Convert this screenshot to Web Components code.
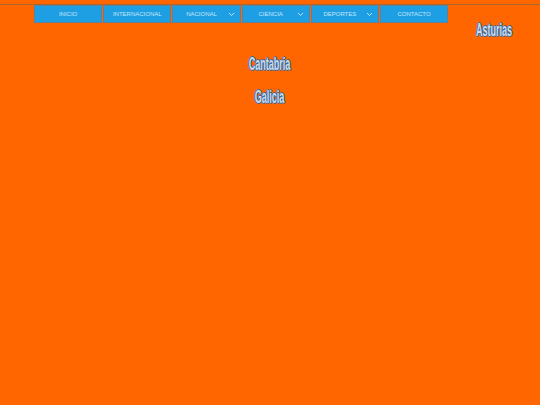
<!DOCTYPE html>
<html><head><meta charset="utf-8"><title>Menu</title>
<style>html,body{margin:0;padding:0;background:#ff6600;height:100%;font-family:"Liberation Sans",sans-serif}</style>
</head><body>
<site-page>
<site-nav slot="nav">
<nav-item>INICIO</nav-item><nav-item>INTERNACIONAL</nav-item><nav-item caret>NACIONAL</nav-item><nav-item caret>CIENCIA</nav-item><nav-item caret>DEPORTES</nav-item><nav-item>CONTACTO</nav-item>
</site-nav>
<region-title slot="side">Asturias</region-title>
<region-title>Cantabria</region-title>
<region-title>Galicia</region-title>
</site-page>
<script>
customElements.define('site-page',class extends HTMLElement{constructor(){super();this.attachShadow({mode:'open'}).innerHTML=`<style>
:host{display:block;width:540px;height:405px;background:#ff6600;box-sizing:border-box;overflow:hidden}
.rule{height:1px;margin-top:4px;background:#a8682f}
.nav{display:block;padding-left:34px}
.side{display:flex;justify-content:flex-end;padding-right:10px;margin-top:-3px;height:34px}
.main{display:flex;flex-direction:column;align-items:center;gap:13px;margin-top:0}
</style><div class="rule"></div><div class="nav"><slot name="nav"></slot></div><div class="side"><slot name="side"></slot></div><div class="main"><slot></slot></div>`}});
customElements.define('site-nav',class extends HTMLElement{constructor(){super();this.attachShadow({mode:'open'}).innerHTML=`<style>
:host{display:flex;gap:1px;margin:0}
</style><slot></slot>`}});
customElements.define('nav-item',class extends HTMLElement{constructor(){super();const c=this.hasAttribute('caret');this.attachShadow({mode:'open'}).innerHTML=`<style>
:host{display:block;position:relative;width:68.2px;height:18px;margin-top:-.5px;box-sizing:border-box;background:#1f9fe3;border:1px solid #5f8296;color:#c4e6f8;font:6px/16px "Liberation Sans",sans-serif;text-align:center;padding-right:${c?'10px':'0'}}
svg{position:absolute;right:5px;top:6px;width:7px;height:5px}
</style><slot></slot>${c?'<svg viewBox="0 0 7 5"><path d="M1 1l2.5 2.5L6 1" fill="none" stroke="#cfeafa" stroke-width=".9"/></svg>':''}`}});
customElements.define('region-title',class extends HTMLElement{constructor(){super();this.attachShadow({mode:'open'}).innerHTML=`<style>
:host{display:block;height:20px;font:bold 18px/20px "Liberation Sans",sans-serif;color:#cfdbe8;text-shadow:2px 0 0 #356a9e,-2px 0 0 #356a9e,0 1px 0 #356a9e,0 -1px 0 #356a9e;transform:scaleX(.5);white-space:nowrap}
</style><slot></slot>`}});
</script>
</body></html>
